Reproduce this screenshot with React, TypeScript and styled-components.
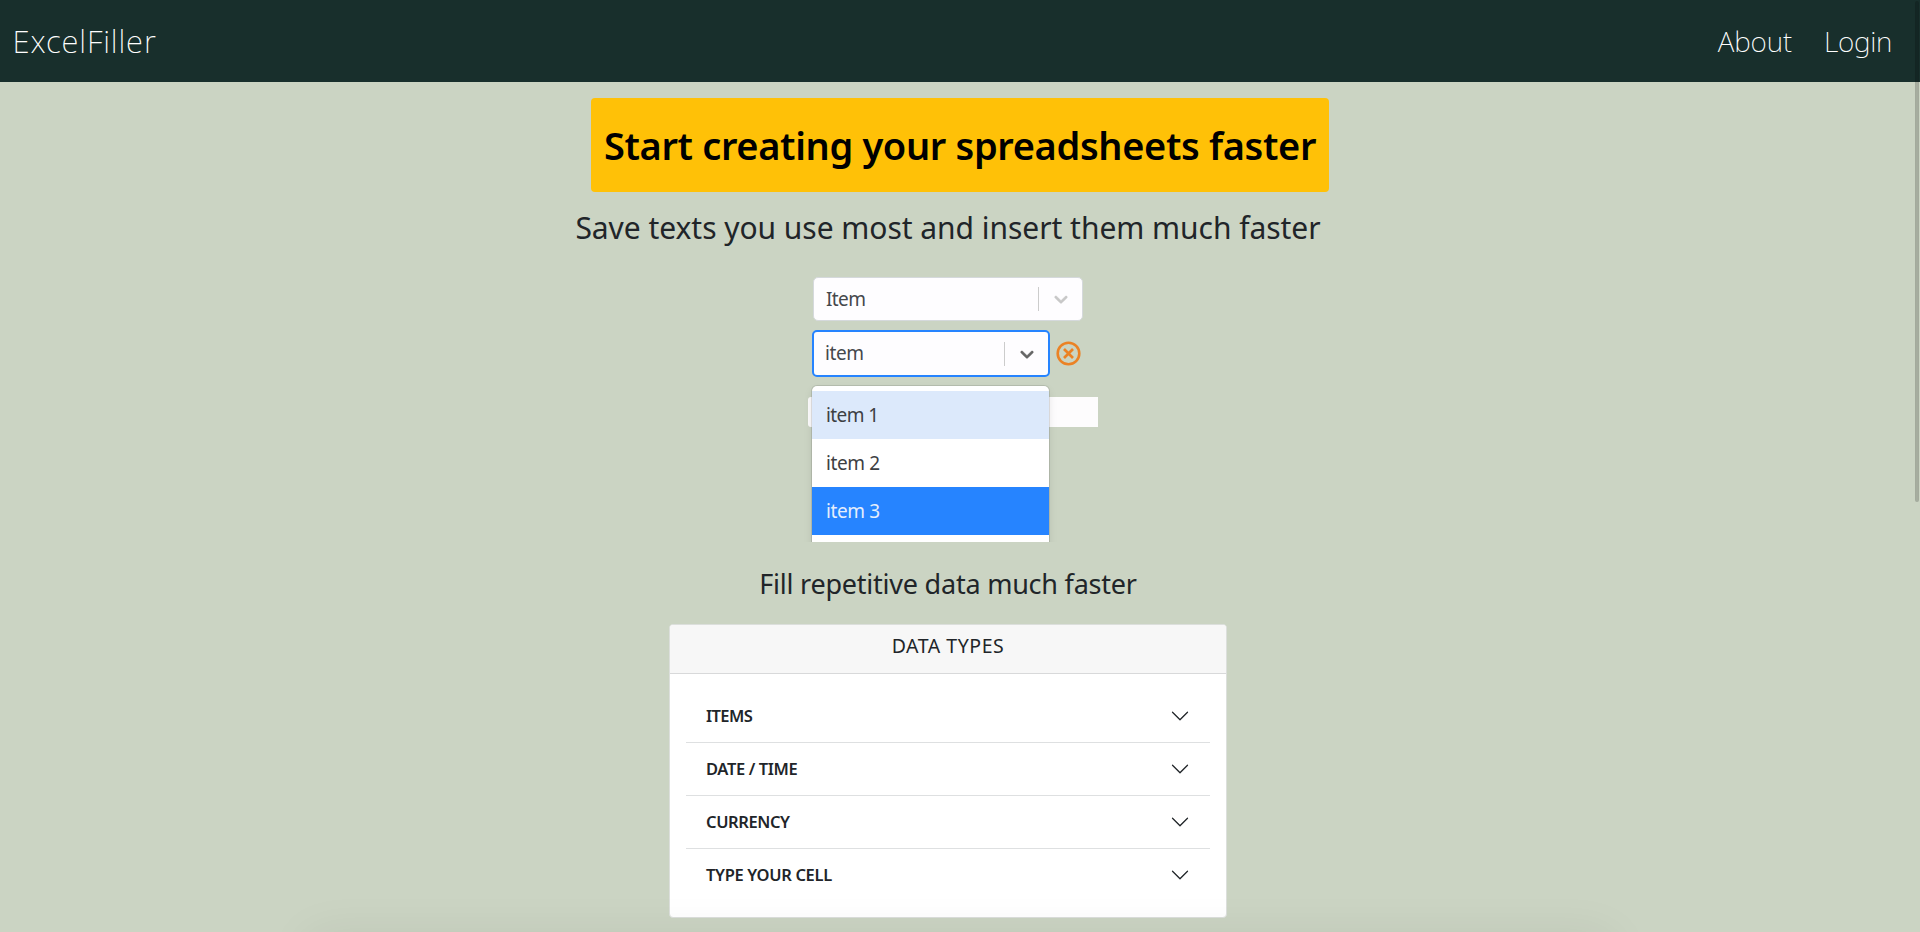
import React from 'react';
import styled, { createGlobalStyle } from 'styled-components';

const Global = createGlobalStyle`
  * { box-sizing: border-box; }
  body { margin: 0; background: #cbd4c3; color: #212529; font-family: "Noto Sans", sans-serif; overflow: hidden; }
`;

const Page = styled.div`
  position: relative;
  height: 932px;
  overflow: hidden;
  display: flex;
  flex-direction: column;
`;

const Navbar = styled.nav`
  height: 82px;
  flex: none;
  background: #182f2c;
  color: #fff;
  display: flex;
  justify-content: space-between;
  align-items: center;
  padding: 1px 28px 0 12.5px;
`;

const Links = styled.div`
  display: flex;
  gap: 32px;
`;

const Label = styled.span<{ $size: number; $spacing?: number; $weight?: number }>`
  display: block;
  white-space: nowrap;
  font-size: ${p => p.$size}px;
  letter-spacing: ${p => p.$spacing ?? 0}px;
  font-weight: ${p => p.$weight ?? 400};
  line-height: 1.2;
`;

const Main = styled.main`
  display: flex;
  flex-direction: column;
  align-items: center;
  padding-top: 16px;
`;

const Banner = styled.h1`
  margin: 0;
  width: 738px;
  height: 94px;
  padding-top: 2px;
  border-radius: 4px;
  background: #ffc107;
  color: #000;
  display: flex;
  align-items: center;
  justify-content: center;
`;

const Content = styled.section`
  width: 1000px;
  margin-right: 24px;
  display: flex;
  flex-direction: column;
  align-items: center;
`;

const Subtitle = styled.h2`
  margin: 0;
  height: 78px;
  padding-bottom: 6px;
  display: flex;
  align-items: center;
`;

const Demo = styled.div`
  width: 299px;
  height: 272px;
  margin-left: 1px;
  overflow: hidden;
  position: relative;
  padding: 7px 0 0 14px;
  color: #45484c;
`;

const Select = styled.div<{ $focused?: boolean }>`
  width: ${p => (p.$focused ? 238 : 270)}px;
  height: ${p => (p.$focused ? 47 : 44)}px;
  margin-left: ${p => (p.$focused ? -1 : 0)}px;
  border: ${p => (p.$focused ? '2px solid #2684ff' : '1px solid #d5d9dc')};
  border-radius: 5px;
  background: #fefdff;
  display: flex;
  align-items: center;
  padding-left: ${p => (p.$focused ? 11 : 12)}px;
`;

const Divider = styled.i`
  width: 1px;
  height: 24px;
  background: #ccc;
  margin-left: auto;
`;

const Arrow = styled.svg`
  width: 22px;
  height: 22px;
  margin: 0 10px 0 11px;
`;

const FocusRow = styled.div`
  display: flex;
  align-items: center;
  gap: 6px;
  margin-top: 9px;
`;

const Field = styled.div`
  position: absolute;
  left: 9px;
  top: 127px;
  width: 290px;
  height: 30px;
  border-radius: 3px 0 0 3px;
  background: #fdfcfd;
`;

const Menu = styled.div`
  position: absolute;
  left: 13px;
  top: 116px;
  width: 237px;
  height: 190px;
  padding-top: 5px;
  border-radius: 5px;
  background: #fff;
  box-shadow: 0 0 0 1px rgba(0, 0, 0, 0.1), 0 4px 9px rgba(0, 0, 0, 0.1);
`;

const Option = styled.div<{ $bg?: string; $color?: string }>`
  height: 48px;
  padding-left: 14px;
  display: flex;
  align-items: center;
  background: ${p => p.$bg ?? '#fff'};
  color: ${p => p.$color ?? '#3d4043'};
`;

const Caption = styled.h3`
  margin: 0;
  height: 82px;
  padding-top: 2px;
  display: flex;
  align-items: center;
`;

const Card = styled.div`
  width: 558px;
  height: 294px;
  border: 1px solid #dcdfdc;
  border-radius: 4px;
  overflow: hidden;
  background: #fff;
`;

const CardHeader = styled.header`
  height: 49px;
  padding-bottom: 7px;
  background: #f7f7f7;
  border-bottom: 1px solid #d8d9da;
  display: flex;
  align-items: center;
  justify-content: center;
`;

const List = styled.div`
  padding: 16px 16px;
`;

const Row = styled.div`
  height: 53px;
  border-bottom: 1px solid #dee0e1;
  padding: 0 20px;
  display: flex;
  align-items: center;
  justify-content: space-between;
  &:last-child { border-bottom-color: transparent; }
`;

const BottomShade = styled.div`
  position: absolute;
  left: 310px;
  top: 937px;
  width: 1300px;
  height: 60px;
  box-shadow: 0 0 48px rgba(0, 0, 0, 0.08);
`;

const ScrollThumb = styled.div`
  position: absolute;
  right: 1px;
  top: 1px;
  width: 4px;
  height: 501px;
  border: 1px solid rgba(0, 0, 0, 0.02);
  border-radius: 2px;
  background: rgba(0, 0, 0, 0.18);
`;

const SelectArrow = ({ color }: { color: string }) => (
  <Arrow viewBox="0 0 20 20" fill={color} stroke={color} strokeWidth="0.3">
    <path d="M4.516 7.548c0.436-0.446 1.043-0.481 1.576 0l3.908 3.747 3.908-3.747c0.533-0.481 1.141-0.446 1.574 0 0.436 0.445 0.408 1.197 0 1.615-0.406 0.418-4.695 4.502-4.695 4.502-0.217 0.223-0.502 0.335-0.787 0.335s-0.57-0.112-0.789-0.335c0 0-4.287-4.084-4.695-4.502s-0.436-1.17 0-1.615z" />
  </Arrow>
);

const rows = [
  { text: 'ITEMS', spacing: -0.6 },
  { text: 'DATE / TIME', spacing: -0.38 },
  { text: 'CURRENCY', spacing: -0.4 },
  { text: 'TYPE YOUR CELL', spacing: -0.34 },
];

export default function App() {
  return (
    <>
      <Global />
      <Page>
        <Navbar>
          <Label $size={31} $weight={200} $spacing={0.9}>ExcelFiller</Label>
          <Links>
            <Label $size={28} $weight={200} $spacing={-0.1}>About</Label>
            <Label $size={28} $weight={200} $spacing={-0.3}>Login</Label>
          </Links>
        </Navbar>
        <Main>
          <Banner><Label $size={38} $weight={600} $spacing={-0.35}>Start creating your spreadsheets faster</Label></Banner>
          <Content>
            <Subtitle><Label $size={30} $spacing={-0.04}>Save texts you use most and insert them much faster</Label></Subtitle>
            <Demo>
              <Select>
                <Label $size={19} $spacing={-0.6}>Item</Label>
                <Divider />
                <SelectArrow color="#c8c8c8" />
              </Select>
              <FocusRow>
                <Select $focused>
                  <Label $size={19} $spacing={-0.4}>item</Label>
                  <Divider />
                  <SelectArrow color="#666" />
                </Select>
                <svg width="25" height="25" viewBox="0 0 25 25" fill="none" stroke="#eb8225" strokeWidth="2.6">
                  <circle cx="12.5" cy="12.5" r="10.8" />
                  <path d="M8 8l9 9M17 8l-9 9" strokeWidth="2.7" />
                </svg>
              </FocusRow>
              <Field />
              <Menu>
                <Option $bg="#dce9fb"><Label $size={19} $spacing={-0.6}>item 1</Label></Option>
                <Option><Label $size={19} $spacing={-0.4}>item 2</Label></Option>
                <Option $bg="#2684ff" $color="#e4eefc"><Label $size={19} $spacing={-0.4}>item 3</Label></Option>
              </Menu>
            </Demo>
            <Caption><Label $size={27} $spacing={-0.23}>Fill repetitive data much faster</Label></Caption>
            <Card>
              <CardHeader><Label $size={19.5} $spacing={0.55}>DATA TYPES</Label></CardHeader>
              <List>
                {rows.map(r => (
                  <Row key={r.text}>
                    <Label $size={16.5} $weight={600} $spacing={r.spacing}>{r.text}</Label>
                    <svg width="20" height="20" viewBox="0 0 16 16" fill="#212529">
                      <path fillRule="evenodd" d="M1.646 4.646a.5.5 0 0 1 .708 0L8 10.293l5.646-5.647a.5.5 0 0 1 .708.708l-6 6a.5.5 0 0 1-.708 0l-6-6a.5.5 0 0 1 0-.708z" />
                    </svg>
                  </Row>
                ))}
              </List>
            </Card>
          </Content>
        </Main>
        <BottomShade />
        <ScrollThumb />
      </Page>
    </>
  );
}
